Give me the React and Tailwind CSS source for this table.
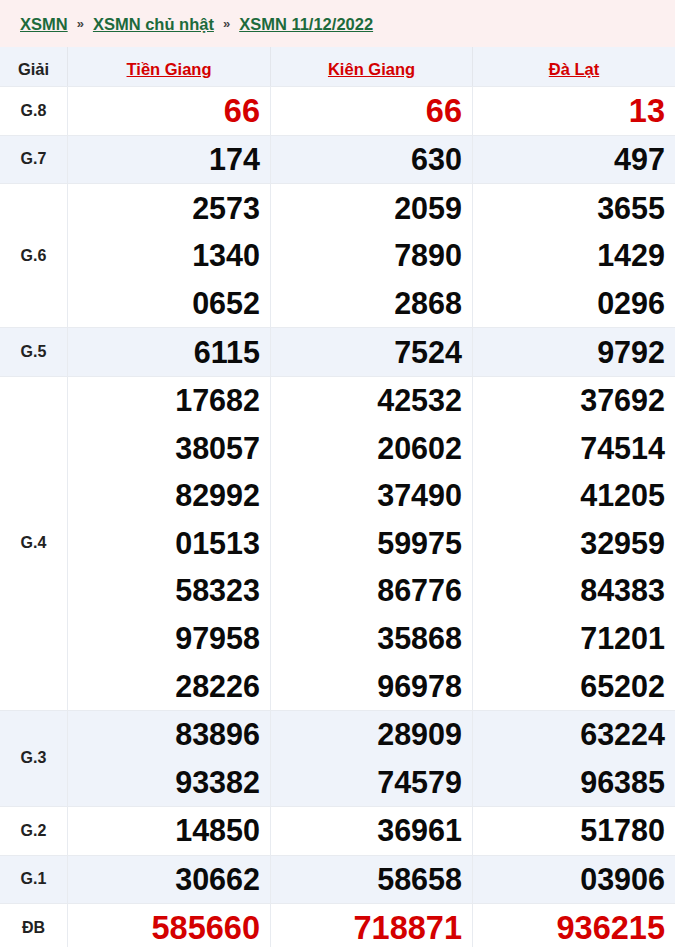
import React from "react";

const provinces = ["Tiền Giang", "Kiên Giang", "Đà Lạt"];

const prizes = [
  { label: "G.8", red: true, nums: [["66"], ["66"], ["13"]] },
  { label: "G.7", nums: [["174"], ["630"], ["497"]] },
  { label: "G.6", nums: [["2573", "1340", "0652"], ["2059", "7890", "2868"], ["3655", "1429", "0296"]] },
  { label: "G.5", nums: [["6115"], ["7524"], ["9792"]] },
  {
    label: "G.4",
    nums: [
      ["17682", "38057", "82992", "01513", "58323", "97958", "28226"],
      ["42532", "20602", "37490", "59975", "86776", "35868", "96978"],
      ["37692", "74514", "41205", "32959", "84383", "71201", "65202"],
    ],
  },
  { label: "G.3", nums: [["83896", "93382"], ["28909", "74579"], ["63224", "96385"]] },
  { label: "G.2", nums: [["14850"], ["36961"], ["51780"]] },
  { label: "G.1", nums: [["30662"], ["58658"], ["03906"]] },
  { label: "ĐB", red: true, nums: [["585660"], ["718871"], ["936215"]] },
];

const App = () => {
  return (
    <div className="w-[675px] min-h-[947px] bg-white font-['Liberation_Sans',Arial,sans-serif]">
      {/* breadcrumb */}
      <div className="h-[47px] bg-[#fcf0f0] flex items-center pl-[20px] pt-[1px] text-[16.5px] font-bold">
        <a className="text-[#1d6a3c] underline">XSMN</a>
        <span className="mx-[9px] text-[#444] text-[13px]">»</span>
        <a className="text-[#1d6a3c] underline">XSMN chủ nhật</a>
        <span className="mx-[9px] text-[#444] text-[13px]">»</span>
        <a className="text-[#1d6a3c] underline">XSMN 11/12/2022</a>
      </div>

      {/* results table */}
      <div className="grid grid-cols-[68px_203px_202px_202px] border-b border-[#e6e9ee]">
        <div className="h-[39px] pt-[6px] bg-[#eff3fa] flex items-center justify-center text-[16.5px] font-bold text-[#222] border-r border-[#e3e6ec]">
          Giải
        </div>
        {provinces.map((p, i) => (
          <div
            key={p}
            className={`h-[39px] pt-[6px] bg-[#eff3fa] flex items-center justify-center ${i < 2 ? "border-r border-[#e3e6ec]" : ""}`}
          >
            <a className="text-[16.5px] font-bold text-[#d40000] underline">{p}</a>
          </div>
        ))}

        {prizes.map((row, idx) => {
          const bg = idx % 2 === 0 ? "bg-white" : "bg-[#eff3fa]";
          return (
            <React.Fragment key={row.label}>
              <div
                className={`${bg} flex items-center justify-center text-[16px] font-bold text-[#222] border-r border-t border-[#e8ebf0]`}
              >
                {row.label}
              </div>
              {row.nums.map((col, ci) => (
                <div
                  key={ci}
                  className={`${bg} flex flex-col border-t border-[#e8ebf0] ${ci < 2 ? "border-r" : ""}`}
                >
                  {col.map((n, ni) => (
                    <div
                      key={ni}
                      className={`h-[47.6px] flex items-center justify-end pr-[10px] font-bold leading-none ${
                        row.red ? "text-[#d40000] text-[32.5px]" : "text-[#0a0a0a] text-[30.5px]"
                      }`}
                    >
                      {n}
                    </div>
                  ))}
                </div>
              ))}
            </React.Fragment>
          );
        })}
      </div>
    </div>
  );
};

export default App;
